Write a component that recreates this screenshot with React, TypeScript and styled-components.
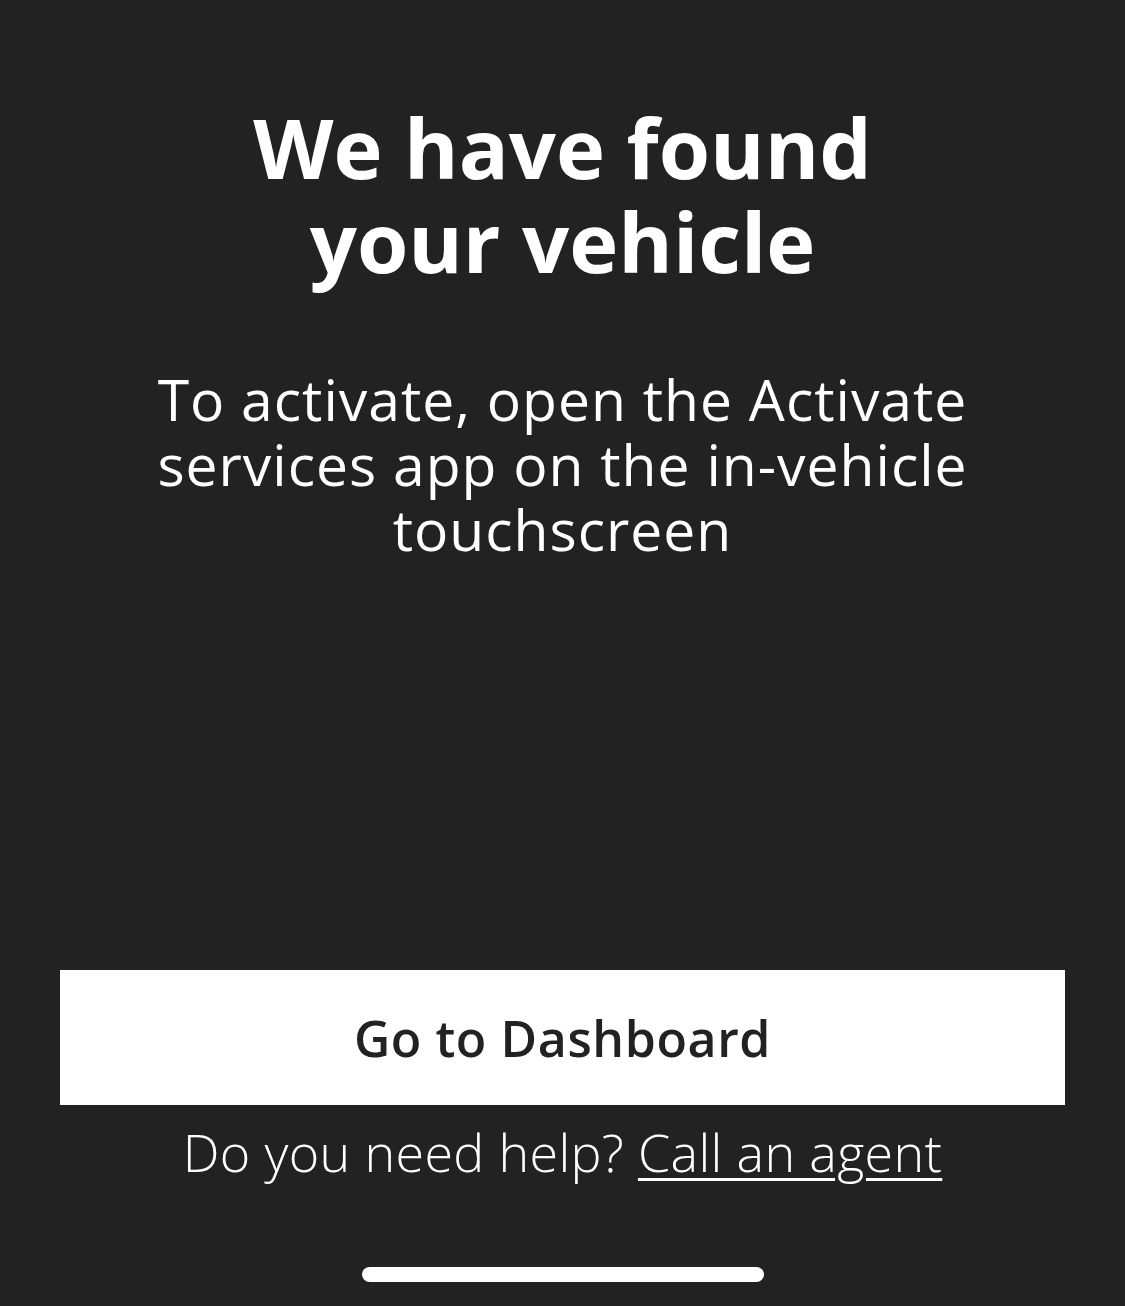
import styled, { createGlobalStyle } from 'styled-components';

const GlobalStyle = createGlobalStyle`
  html, body {
    margin: 0;
    padding: 0;
    background: #222222;
  }
  * { box-sizing: border-box; }
`;

const Screen = styled.div`
  height: 1306px;
  display: flex;
  flex-direction: column;
  align-items: center;
  background: #222222;
  color: #ffffff;
  font-family: 'Open Sans', 'Liberation Sans', sans-serif;
  padding: 100px 60px 24px;
`;

const Title = styled.h1`
  margin: 0;
  font-size: 83px;
  line-height: 94px;
  font-weight: 700;
  text-align: center;
`;

const Message = styled.p`
  margin: 79px 0 0;
  font-size: 57px;
  line-height: 65px;
  font-weight: 400;
  letter-spacing: 1px;
  text-align: center;
`;

const Spacer = styled.div`
  flex: 1;
`;

const PrimaryButton = styled.button`
  width: 100%;
  height: 135px;
  border: none;
  background: #ffffff;
  color: #222222;
  font-family: inherit;
  font-size: 50px;
  font-weight: 600;
  letter-spacing: 0.6px;
  cursor: pointer;
`;

const Help = styled.p`
  margin: 18px 0 0;
  font-size: 52px;
  line-height: 58px;
  font-weight: 300;
  letter-spacing: 0.35px;
  text-align: center;
`;

const AgentLink = styled.a`
  color: #ffffff;
  text-decoration: underline;
  text-decoration-thickness: 3px;
  text-underline-offset: 6px;
`;

const HomeIndicator = styled.div`
  width: 402px;
  height: 15px;
  border-radius: 8px;
  background: #ffffff;
  margin-top: 86px;
`;

export default function App() {
  return (
    <>
      <GlobalStyle />
      <Screen>
        <Title>
          We have found
          <br />
          your vehicle
        </Title>
        <Message>
          To activate, open the Activate
          <br />
          services app on the in-vehicle
          <br />
          touchscreen
        </Message>
        <Spacer />
        <PrimaryButton>Go to Dashboard</PrimaryButton>
        <Help>
          Do you need help? <AgentLink href="#">Call an agent</AgentLink>
        </Help>
        <HomeIndicator />
      </Screen>
    </>
  );
}
